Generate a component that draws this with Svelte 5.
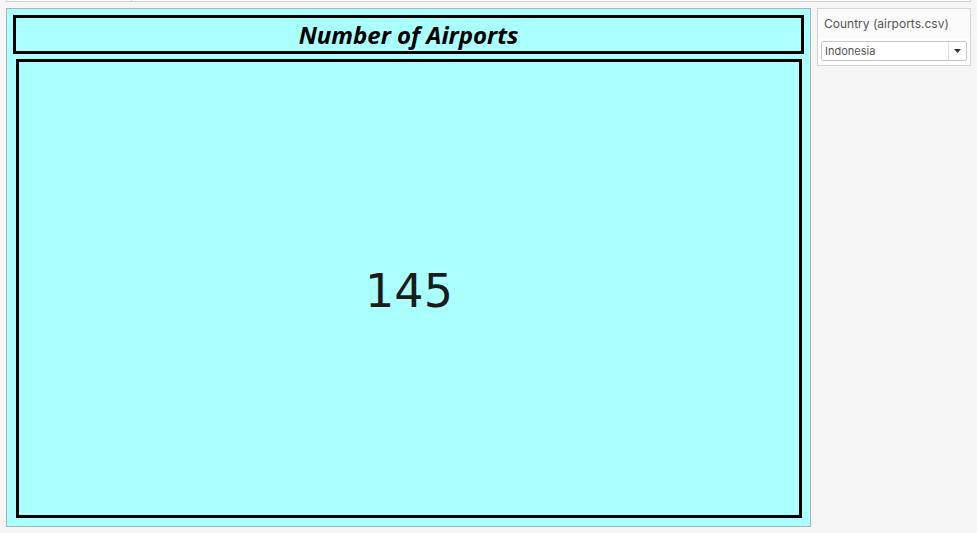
<script>
  let country = $state('Indonesia');
  const airports = { Indonesia: 145 };
</script>

<div class="page">
  <div class="strip"><div class="cell"></div></div>
  <div class="columns">
    <main class="sheet">
      <h1>Number of Airports</h1>
      <section class="view">{airports[country]}</section>
    </main>
    <aside class="filter">
      <label for="country">Country (airports.csv)</label>
      <div class="control">
        <select id="country" bind:value={country}>
          <option>Indonesia</option>
        </select>
        <span class="arrow" aria-hidden="true">
          <svg width="7" height="4" viewBox="0 0 7 4"><path d="M0 0h7L3.5 4z" fill="#333" /></svg>
        </span>
      </div>
    </aside>
  </div>
</div>

<style>
  :global(body) {
    margin: 0;
    background: #f5f5f5;
  }
  .page {
    box-sizing: border-box;
    display: flex;
    flex-direction: column;
    gap: 6px;
    min-height: 100vh;
    padding: 0 6px 6px;
    font-family: Inter, "Liberation Sans", sans-serif;
  }
  .strip {
    display: flex;
    height: 1px;
    border: 1px solid #d0d0d0;
    border-top: 0;
    background: #fff;
  }
  .cell {
    width: 124px;
    border-right: 1px solid #d0d0d0;
  }
  .columns {
    flex: 1;
    display: flex;
    align-items: flex-start;
    gap: 6px;
  }
  .sheet {
    box-sizing: border-box;
    flex: 1;
    align-self: stretch;
    display: flex;
    flex-direction: column;
    gap: 5px;
    padding: 6px 6px 8px;
    border: 1px solid #b0b0b0;
    background: #aaffff;
  }
  h1 {
    margin: 0;
    border: 3px solid #000;
    color: #000;
    font: italic bold 24px/33px "Noto Sans", sans-serif;
    text-align: center;
  }
  .view {
    flex: 1;
    display: flex;
    align-items: center;
    justify-content: center;
    margin: 0 2px 0 3px;
    padding-top: 4px;
    border: 3px solid #000;
    color: #1b1b1b;
    font: 46px/56px "DejaVu Sans", sans-serif;
  }
  .filter {
    box-sizing: border-box;
    width: 154px;
    border: 1px solid #d4d4d4;
    background: #fff;
  }
  label {
    display: block;
    padding: 0 6px;
    background: #fafafa;
    color: #555;
    font-size: 12px;
    line-height: 29px;
  }
  .control {
    display: flex;
    position: relative;
    margin: 3px 3px 4px;
  }
  select {
    box-sizing: border-box;
    width: 100%;
    height: 20px;
    padding: 0 20px 0 3px;
    border: 1px solid #c8c8c8;
    border-radius: 2px;
    background: #fff;
    color: #555;
    font: 11px/18px Inter, "Liberation Sans", sans-serif;
    appearance: none;
  }
  .arrow {
    position: absolute;
    top: 1px;
    right: 1px;
    bottom: 1px;
    width: 17px;
    display: flex;
    align-items: center;
    justify-content: center;
    border-left: 1px solid #ddd;
    pointer-events: none;
  }
</style>
